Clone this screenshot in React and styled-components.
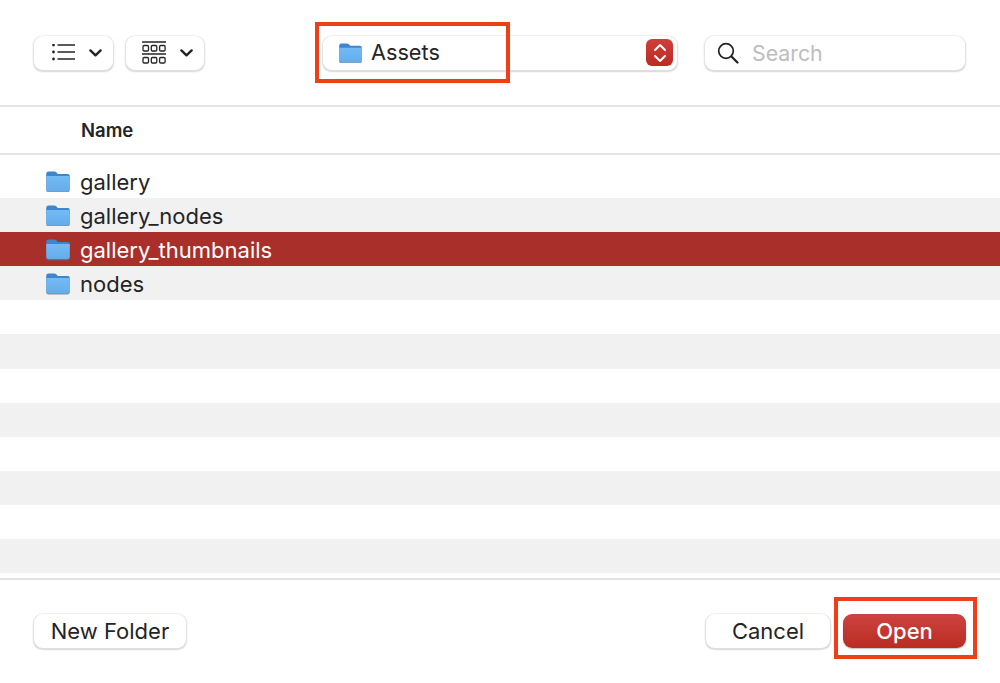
import styled, { createGlobalStyle } from 'styled-components';

const GlobalStyle = createGlobalStyle`
  html, body {
    margin: 0;
    padding: 0;
    background: #fff;
  }
  * {
    box-sizing: border-box;
  }
`;

const folders = ['gallery', 'gallery_nodes', 'gallery_thumbnails', 'nodes'];
const SELECTED = 'gallery_thumbnails';
const ROW_COUNT = 12;

function FolderIcon({ size = 26 }) {
  return (
    <svg width={size} height={size * 0.87} viewBox="0 0 26 23">
      <defs>
        <linearGradient id="folderBody" x1="0" y1="0" x2="0" y2="1">
          <stop offset="0" stopColor="#72bbf4" />
          <stop offset="1" stopColor="#64adec" />
        </linearGradient>
      </defs>
      <path d="M1 4 Q1 1.5 3.5 1.5 H9 Q10.5 1.5 11.5 2.6 L12.8 4 H23 Q25 4 25 6 V10 H1 Z" fill="#3d85cc" />
      <path d="M1 6.5 H25 V20 Q25 22.8 22.5 22.8 H3.5 Q1 22.8 1 20 Z" fill="#566a80" opacity="0.7" />
      <path d="M1 6.2 H25 V19.4 Q25 21.6 22.8 21.6 H3.2 Q1 21.6 1 19.4 Z" fill="url(#folderBody)" />
    </svg>
  );
}

function Chevron() {
  return (
    <svg width="13" height="8" viewBox="0 0 13 8" fill="none">
      <path d="M1.4 1.4 L6.5 6.3 L11.6 1.4" stroke="#242424" strokeWidth="2.4" strokeLinecap="round" strokeLinejoin="round" />
    </svg>
  );
}

function ListIcon() {
  return (
    <svg width="23" height="18" viewBox="0 1 23 18" fill="none">
      <circle cx="1.5" cy="2" r="1.4" fill="#242424" />
      <circle cx="1.5" cy="9" r="1.4" fill="#242424" />
      <circle cx="1.5" cy="16" r="1.4" fill="#242424" />
      <path d="M5.5 2 H23 M5.5 9 H23 M5.5 16 H23" stroke="#242424" strokeWidth="1.5" />
    </svg>
  );
}

function GridIcon() {
  return (
    <svg width="24" height="24" viewBox="0 0 24 24" fill="none" stroke="#242424">
      <path d="M0 1 H24 M0 13 H24" strokeWidth="1.5" />
      <rect x="1" y="4.5" width="5.5" height="5.5" rx="1.2" strokeWidth="1.3" />
      <rect x="9.3" y="4.5" width="5.5" height="5.5" rx="1.2" strokeWidth="1.3" />
      <rect x="17.6" y="4.5" width="5.5" height="5.5" rx="1.2" strokeWidth="1.3" />
      <rect x="1" y="16.5" width="5.5" height="5.5" rx="1.2" strokeWidth="1.3" />
      <rect x="9.3" y="16.5" width="5.5" height="5.5" rx="1.2" strokeWidth="1.3" />
      <rect x="17.6" y="16.5" width="5.5" height="5.5" rx="1.2" strokeWidth="1.3" />
    </svg>
  );
}

function SearchIcon() {
  return (
    <svg width="22" height="22" viewBox="0 0 22 22" fill="none" stroke="#222">
      <circle cx="9" cy="9" r="7.3" strokeWidth="1.7" />
      <path d="M14.5 14.5 L20.5 20.5" strokeWidth="2.2" strokeLinecap="round" />
    </svg>
  );
}

function Stepper() {
  return (
    <StepperBox>
      <svg width="14" height="22" viewBox="0 0 14 22" fill="none" stroke="#fff" strokeWidth="2" strokeLinecap="round" strokeLinejoin="round">
        <path d="M2 8 L7 3 L12 8" />
        <path d="M2 14 L7 19 L12 14" />
      </svg>
    </StepperBox>
  );
}

export default function App() {
  return (
    <Dialog>
      <GlobalStyle />
      <Toolbar>
        <ViewButton $width={79} $pad={18}>
          <ListIcon />
          <Chevron />
        </ViewButton>
        <ViewButton $width={78} $pad={16}>
          <GridIcon />
          <Chevron />
        </ViewButton>
        <PathSelect>
          <FolderIcon size={25} />
          <PathName>Assets</PathName>
          <Stepper />
        </PathSelect>
        <SearchField>
          <SearchIcon />
          <SearchText>Search</SearchText>
        </SearchField>
      </Toolbar>
      <ColumnHeader>Name</ColumnHeader>
      <FileList>
        {Array.from({ length: ROW_COUNT }).map((_, i) => (
          <Row key={i} $odd={i % 2 === 1} $selected={folders[i] === SELECTED}>
            {folders[i] && (
              <>
                <FolderIcon />
                <RowName>{folders[i]}</RowName>
              </>
            )}
          </Row>
        ))}
      </FileList>
      <Footer>
        <Button>New Folder</Button>
        <FooterRight>
          <Button $width={124}>Cancel</Button>
          <PrimaryButton>Open</PrimaryButton>
        </FooterRight>
      </Footer>
      <Callout $left={315} $top={22} $width={195} $height={61} />
      <Callout $left={834} $top={597} $width={143} $height={62} />
    </Dialog>
  );
}

const Dialog = styled.div`
  position: relative;
  width: 1000px;
  height: 683px;
  overflow: hidden;
  background: #fff;
  color: #242424;
  font-family: Inter, "Liberation Sans", sans-serif;
`;

const Toolbar = styled.header`
  display: flex;
  align-items: center;
  height: 107px;
  padding: 0 35px 0 34px;
  border-bottom: 2px solid #e3e3e3;
`;

const Control = styled.div`
  height: 34px;
  display: flex;
  align-items: center;
  background: #fff;
  border-radius: 9px;
  box-shadow: 0 0 0 0.5px #e8e8e8, 0 1px 1.5px 0.5px rgba(0, 0, 0, 0.16);
`;

const ViewButton = styled(Control)`
  width: ${(p) => p.$width}px;
  margin-right: 13px;
  padding: 0 11px 0 ${(p) => p.$pad}px;
  justify-content: space-between;
`;

const PathSelect = styled(Control)`
  width: 354px;
  margin-left: 106px;
  margin-right: 28px;
  padding: 0 4px 0 15px;
`;

const PathName = styled.span`
  margin-left: 8px;
  padding-bottom: 2px;
  font-size: 21.7px;
  flex: 1;
`;

const StepperBox = styled.div`
  width: 27px;
  height: 27px;
  display: flex;
  align-items: center;
  justify-content: center;
  border-radius: 6px;
  background: linear-gradient(#cf3e38, #bb2c24);
`;

const SearchField = styled(Control)`
  width: 260px;
  padding: 0 0 0 12px;
`;

const SearchText = styled.span`
  margin-left: 13px;
  font-size: 21.3px;
  color: #bdbdbd;
`;

const ColumnHeader = styled.div`
  height: 48px;
  display: flex;
  align-items: center;
  padding-left: 81px;
  font-size: 18.5px;
  font-weight: 600;
  border-bottom: 2px solid #e3e3e3;
`;

const FileList = styled.div`
  height: 425px;
  padding-top: 9px;
  border-bottom: 2px solid #e3e3e3;
`;

const Row = styled.div`
  height: 34.1px;
  display: flex;
  align-items: center;
  gap: 9px;
  padding-left: 45px;
  font-size: 22px;
  color: ${(p) => (p.$selected ? '#fff' : '#242424')};
  background: ${(p) => (p.$selected ? '#a9302a' : p.$odd ? '#f1f1f1' : '#fff')};
`;

const RowName = styled.span`
  padding-top: 2px;
`;

const Footer = styled.footer`
  display: flex;
  align-items: center;
  justify-content: space-between;
  padding: 34px 34px 0;
`;

const FooterRight = styled.div`
  display: flex;
  gap: 13px;
`;

const Button = styled(Control)`
  width: ${(p) => p.$width || 152}px;
  justify-content: center;
  font-size: 22px;
`;

const PrimaryButton = styled(Control)`
  width: 123px;
  justify-content: center;
  font-size: 22px;
  font-weight: 500;
  color: #fff;
  background: linear-gradient(#cd4340, #b92c22);
  box-shadow: 0 1px 1.5px rgba(0, 0, 0, 0.25);
`;

const Callout = styled.div`
  position: absolute;
  left: ${(p) => p.$left}px;
  top: ${(p) => p.$top}px;
  width: ${(p) => p.$width}px;
  height: ${(p) => p.$height}px;
  border: 4px solid #ee3f18;
`;
